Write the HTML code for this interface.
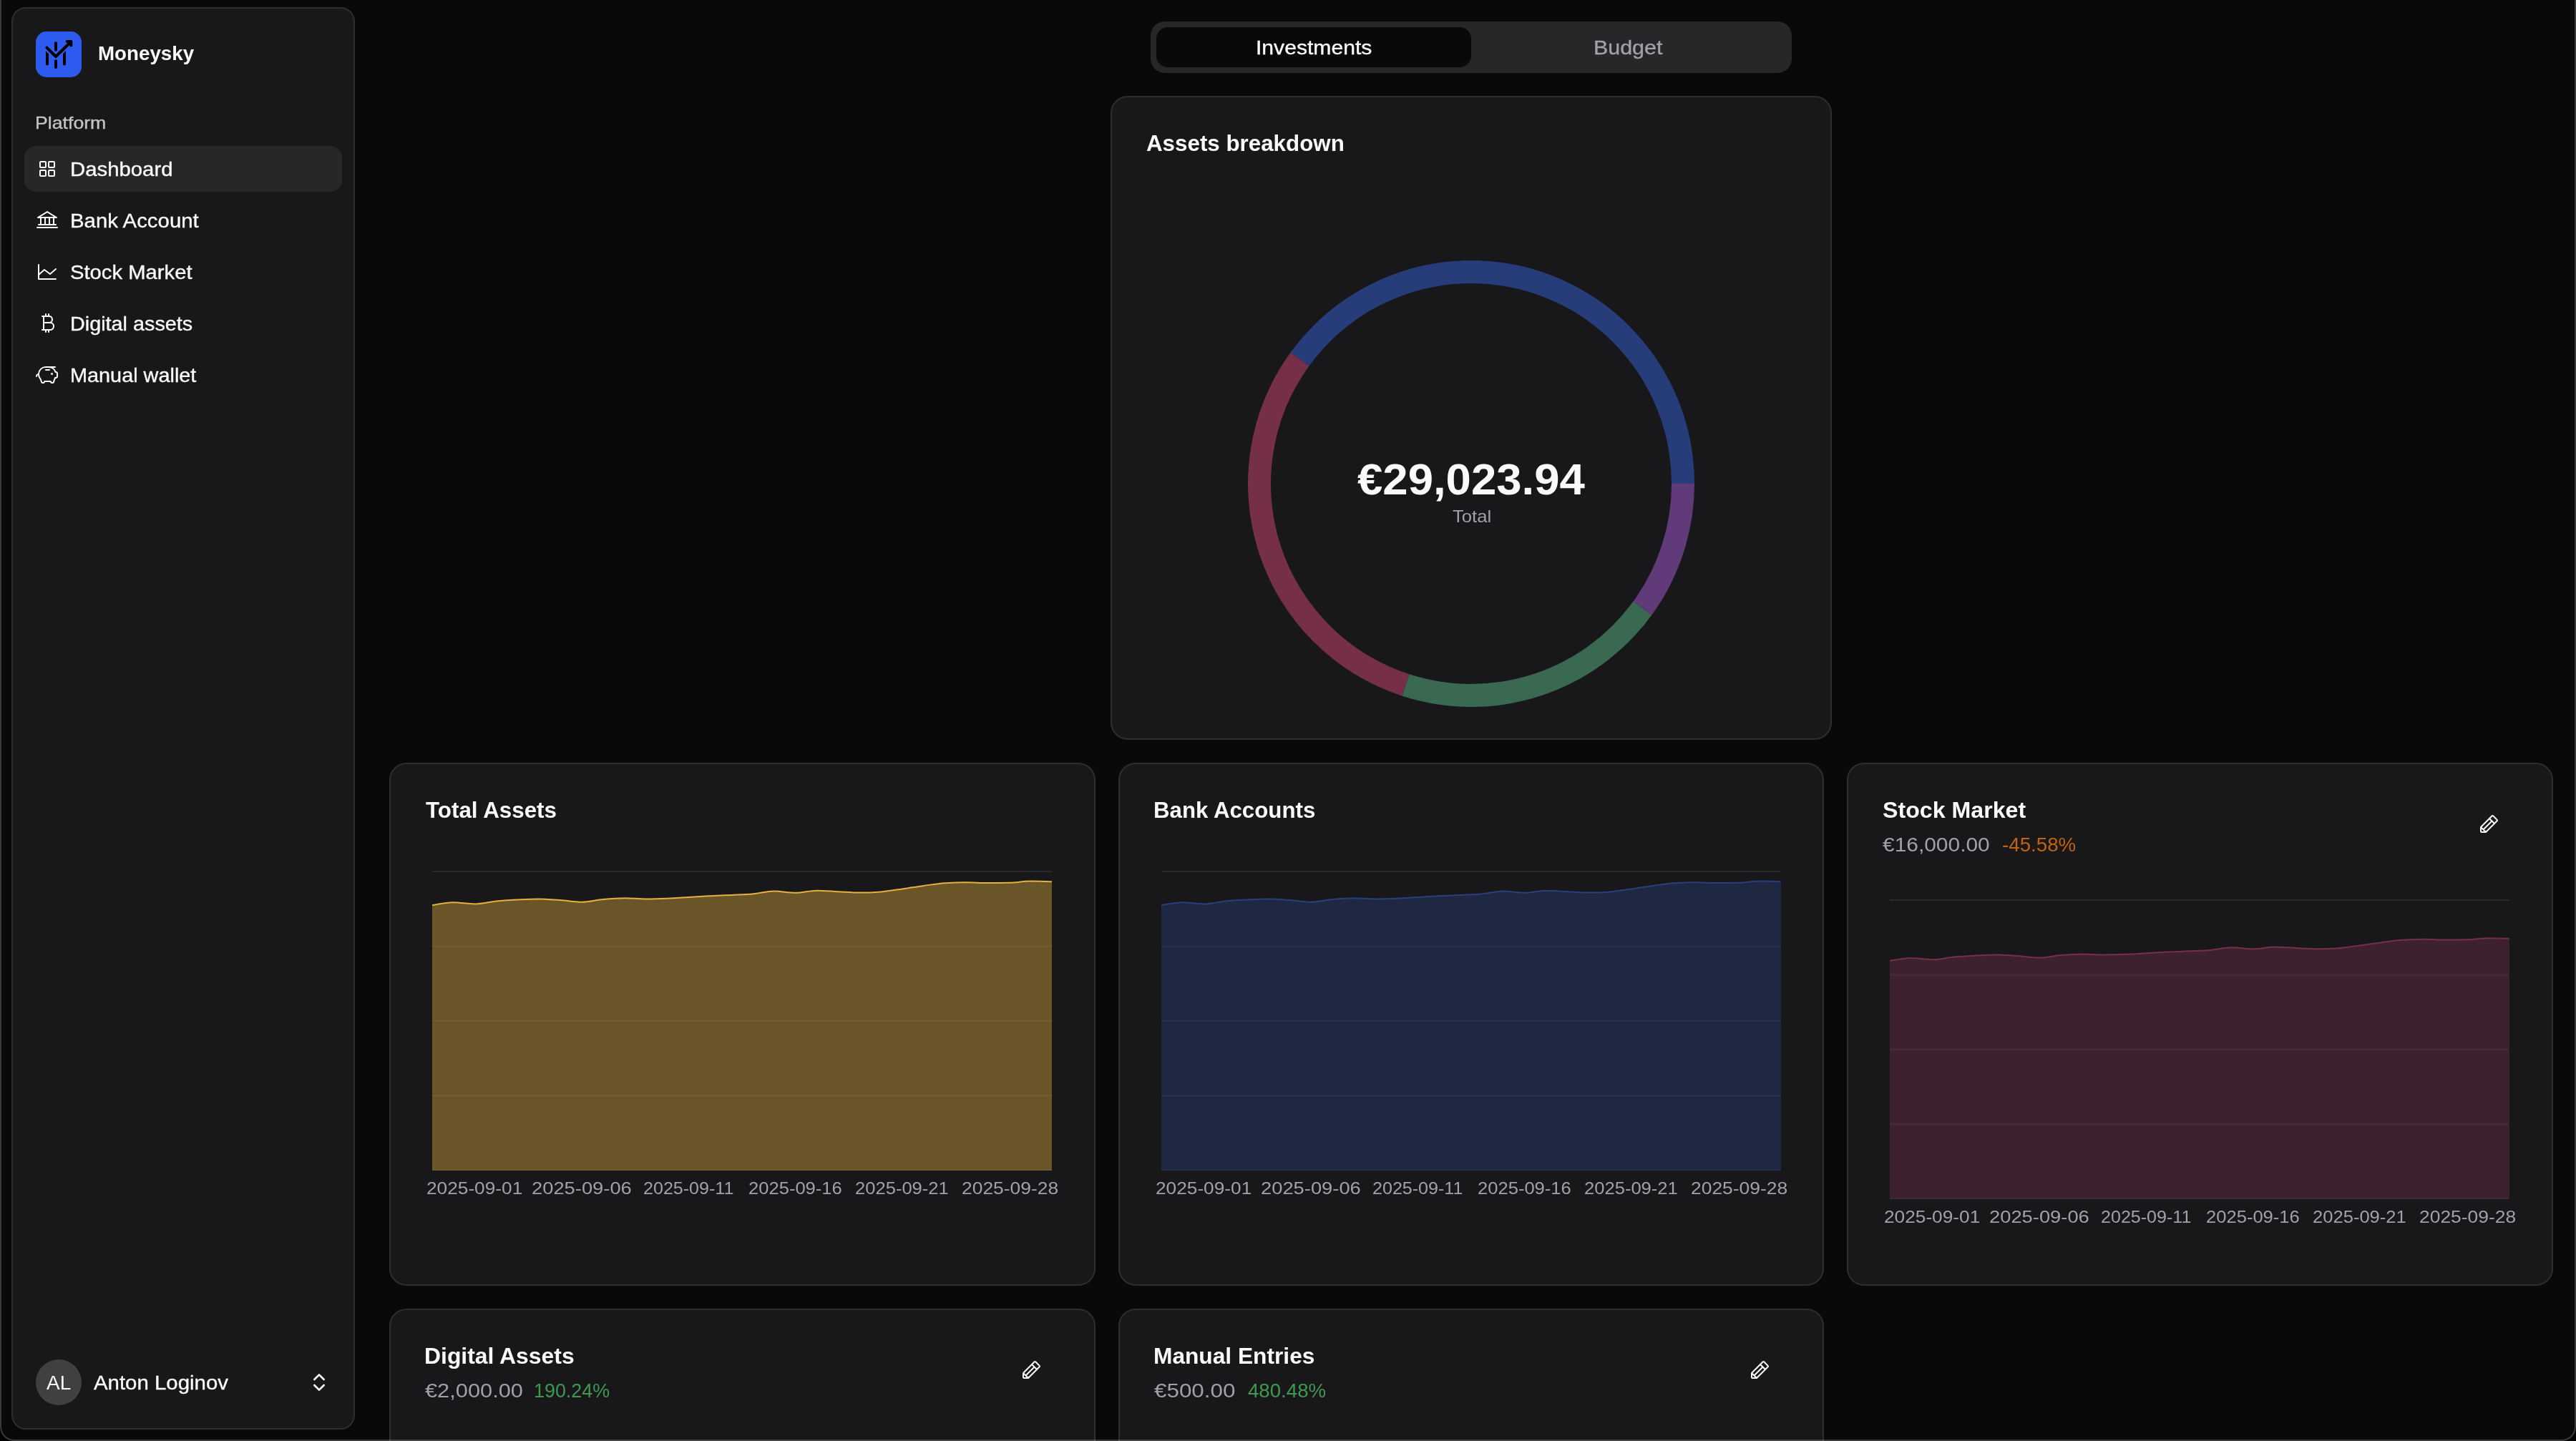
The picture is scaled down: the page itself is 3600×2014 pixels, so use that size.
<!DOCTYPE html>
<html><head><meta charset="utf-8"><title>Moneysky</title><style>
*{box-sizing:border-box;margin:0;padding:0}
html,body{width:3600px;height:2014px;overflow:hidden;background:#000}
body{font-family:"Liberation Sans", sans-serif;position:relative}
.abs{position:absolute}
.t{position:absolute;white-space:pre;line-height:1;font-family:"Liberation Sans", sans-serif;transform-origin:0 0}
.win{position:absolute;left:0;top:0;width:3600px;height:2014px;background:#09090b;border-radius:0 0 20px 20px}
.card{position:absolute;background:#18181b;border:2px solid #2e2e31;border-radius:24px}
</style></head><body>
<div class="win"></div>
<div class="card" style="left:16px;top:10px;width:480px;height:1988px;border-radius:20px"></div>
<div class="abs" style="left:50px;top:44px;width:64px;height:64px;border-radius:15px;background:#2d5bf0"></div>
<svg class="abs" style="left:50px;top:44px" width="64" height="64" viewBox="0 0 64 64" fill="none" stroke-linecap="round" stroke-linejoin="round">
<g stroke="#000" stroke-width="4"><line x1="16" y1="24" x2="16" y2="45.5"/><line x1="40" y1="24" x2="40" y2="45.5"/></g>
<polyline points="13,20.6 28,35 51,12.6" stroke="#2d5bf0" stroke-width="8.4" stroke-linecap="butt"/>
<g stroke="#000" stroke-width="4"><line x1="28" y1="16.3" x2="28" y2="25.7"/><line x1="28" y1="41.3" x2="28" y2="49.9"/>
<polyline points="15.4,22.6 28,35 49.2,14.3"/><polyline points="43.8,14 49.3,14 49.3,19.5"/></g></svg>
<div class="abs" style="left:34px;top:204px;width:444px;height:64px;border-radius:16px;background:#27272a"></div>
<svg class="abs" style="left:50px;top:220px" width="32" height="32" viewBox="0 0 256 256" fill="#fafafa"><path d="M104,40H56A16,16,0,0,0,40,56v48a16,16,0,0,0,16,16h48a16,16,0,0,0,16-16V56A16,16,0,0,0,104,40Zm0,64H56V56h48v48Zm96-64H152a16,16,0,0,0-16,16v48a16,16,0,0,0,16,16h48a16,16,0,0,0,16-16V56A16,16,0,0,0,200,40Zm0,64H152V56h48v48Zm-96,32H56a16,16,0,0,0-16,16v48a16,16,0,0,0,16,16h48a16,16,0,0,0,16-16V152A16,16,0,0,0,104,136Zm0,64H56V152h48v48Zm96-64H152a16,16,0,0,0-16,16v48a16,16,0,0,0,16,16h48a16,16,0,0,0,16-16V152A16,16,0,0,0,200,136Zm0,64H152V152h48v48Z"/></svg>
<svg class="abs" style="left:50px;top:292px" width="32" height="32" viewBox="0 0 256 256" fill="#fafafa"><path d="M24,104H48v64H32a8,8,0,0,0,0,16H224a8,8,0,0,0,0-16H208V104h24a8,8,0,0,0,4.19-14.81l-104-64a8,8,0,0,0-8.38,0l-104,64A8,8,0,0,0,24,104Zm40,0H96v64H64Zm80,0v64H112V104Zm48,64H160V104h32ZM128,41.39,203.74,88H52.26ZM248,208a8,8,0,0,1-8,8H16a8,8,0,0,1,0-16H240A8,8,0,0,1,248,208Z"/></svg>
<svg class="abs" style="left:50px;top:364px" width="32" height="32" viewBox="0 0 256 256" fill="#fafafa"><path d="M232,208a8,8,0,0,1-8,8H32a8,8,0,0,1-8-8V48a8,8,0,0,1,16,0v94.37L90.73,98a8,8,0,0,1,10.07-.38l58.81,44.11L218.73,90a8,8,0,1,1,10.54,12l-64,56a8,8,0,0,1-10.07.38L96.39,114.29,40,163.63V200H224A8,8,0,0,1,232,208Z"/></svg>
<svg class="abs" style="left:51px;top:436px" width="32" height="32" viewBox="0 0 256 256" fill="#fafafa"><path d="M170.48,115.7A44,44,0,0,0,144,40.19V24a8,8,0,0,0-16,0V40H112V24a8,8,0,0,0-16,0V40H64a8,8,0,0,0,0,16h8V192H64a8,8,0,0,0,0,16H96v16a8,8,0,0,0,16,0V208h16v16a8,8,0,0,0,16,0V208h8a48,48,0,0,0,18.48-92.3ZM168,84a28,28,0,0,1-28,28H88V56h52A28,28,0,0,1,168,84ZM152,192H88V128h64a32,32,0,0,1,0,64Z"/></svg>
<svg class="abs" style="left:50px;top:508px" width="32" height="32" viewBox="0 0 256 256" fill="#fafafa"><path d="M192,116a12,12,0,1,1-12-12A12,12,0,0,1,192,116ZM152,64H112a8,8,0,0,0,0,16h40a8,8,0,0,0,0-16Zm96,48v32a24,24,0,0,1-24,24h-2.36l-16.21,45.38A16,16,0,0,1,190.36,224H177.64a16,16,0,0,1-15.07-10.62L160.65,208h-57.3l-1.92,5.38A16,16,0,0,1,86.36,224H73.64a16,16,0,0,1-15.07-10.62L46,178.22a87.69,87.69,0,0,1-21.44-48.38A16,16,0,0,0,16,144a8,8,0,0,1-16,0,32,32,0,0,1,24.28-31A88.12,88.12,0,0,1,112,32H216a8,8,0,0,1,0,16H194.61a87.93,87.93,0,0,1,30.17,37c.43,1,.85,2,1.25,3A24,24,0,0,1,248,112Zm-16,0a8,8,0,0,0-8-8h-3.66a8,8,0,0,1-7.64-5.6A71.9,71.9,0,0,0,144,48H112A72,72,0,0,0,58.91,168.64a8,8,0,0,1,1.64,2.71L73.64,208H86.36l3.82-10.69A8,8,0,0,1,97.71,192h68.58a8,8,0,0,1,7.53,5.31L177.64,208h12.72l18.11-50.69A8,8,0,0,1,216,152h8a8,8,0,0,0,8-8Z"/></svg>
<div class="abs" style="left:50px;top:1900px;width:64px;height:64px;border-radius:50%;background:#404040"></div>
<svg class="abs" style="left:430px;top:1916px" width="32" height="32" viewBox="0 0 24 24" fill="none" stroke="#fafafa" stroke-width="2" stroke-linecap="round" stroke-linejoin="round"><path d="m7 15 5 5 5-5"/><path d="m7 9 5-5 5 5"/></svg>
<div class="abs" style="left:1608px;top:30px;width:896px;height:72px;border-radius:20px;background:#27272a"></div>
<div class="abs" style="left:1616px;top:38px;width:440px;height:56px;border-radius:16px;background:#09090b"></div>
<div class="card" style="left:1552px;top:134px;width:1008px;height:900px"></div>
<svg class="abs" style="left:1552px;top:134px" width="1008" height="900" viewBox="1552 134 1008 900"><path d="M2368.00,676.00A312,312 0 0 0 1803.59,492.61L1829.48,511.42A280,280 0 0 1 2336.00,676.00Z" fill="#273d7a"/><path d="M1803.59,492.61A312,312 0 0 0 1959.59,972.73L1969.48,942.30A280,280 0 0 1 1829.48,511.42Z" fill="#762f48"/><path d="M1959.59,972.73A312,312 0 0 0 2308.41,859.39L2282.52,840.58A280,280 0 0 1 1969.48,942.30Z" fill="#3a6952"/><path d="M2308.41,859.39A312,312 0 0 0 2368.00,676.00L2336.00,676.00A280,280 0 0 1 2282.52,840.58Z" fill="#613a7a"/></svg>
<div class="card" style="left:544.00px;top:1066px;width:986.67px;height:731px"></div>
<div class="card" style="left:1562.67px;top:1066px;width:986.67px;height:731px"></div>
<div class="card" style="left:2581.33px;top:1066px;width:986.67px;height:731px"></div>
<div class="card" style="left:544.00px;top:1829px;width:986.67px;height:300px"></div>
<div class="card" style="left:1562.67px;top:1829px;width:986.67px;height:300px"></div>
<svg class="abs" style="left:603.85px;top:1217.00px" width="866" height="419.1" viewBox="0 0 866 419.1"><line x1="0" x2="866.0" y1="1.05" y2="1.05" stroke="#2a2a2d" stroke-width="2"/><line x1="0" x2="866.0" y1="105.45" y2="105.45" stroke="#2a2a2d" stroke-width="2"/><line x1="0" x2="866.0" y1="209.85" y2="209.85" stroke="#2a2a2d" stroke-width="2"/><line x1="0" x2="866.0" y1="314.25" y2="314.25" stroke="#2a2a2d" stroke-width="2"/><line x1="0" x2="866.0" y1="418.65" y2="418.65" stroke="#2a2a2d" stroke-width="2"/><path d="M0.00,48.30C9.95,46.25,19.91,44.20,29.86,44.20C39.82,44.20,49.77,46.50,59.72,46.50C69.68,46.50,79.63,43.50,89.59,42.50C99.54,41.50,109.49,41.02,119.45,40.50C129.40,39.98,139.36,39.40,149.31,39.40C159.26,39.40,169.22,40.28,179.17,41.00C189.13,41.72,199.08,43.70,209.03,43.70C218.99,43.70,228.94,40.90,238.90,40.00C248.85,39.10,258.80,38.30,268.76,38.30C278.71,38.30,288.67,39.40,298.62,39.40C308.57,39.40,318.53,39.10,328.48,38.70C338.44,38.30,348.39,37.58,358.34,37.00C368.30,36.42,378.25,35.72,388.21,35.20C398.16,34.68,408.11,34.37,418.07,33.90C428.02,33.43,437.98,33.30,447.93,32.40C457.89,31.50,467.84,28.50,477.79,28.50C487.75,28.50,497.70,30.80,507.66,30.80C517.61,30.80,527.56,27.70,537.52,27.70C547.47,27.70,557.43,28.72,567.38,29.20C577.33,29.68,587.29,30.60,597.24,30.60C607.20,30.60,617.15,30.20,627.10,29.40C637.06,28.60,647.01,26.82,656.97,25.40C666.92,23.98,676.87,22.27,686.83,20.90C696.78,19.53,706.74,17.80,716.69,17.20C726.64,16.60,736.60,16.30,746.55,16.30C756.51,16.30,766.46,17.00,776.41,17.00C786.37,17.00,796.32,16.93,806.28,16.80C816.23,16.67,826.18,14.60,836.14,14.60C846.09,14.60,856.05,14.90,866.00,15.20L866.00,419.10L0,419.10Z" fill="#e6b23e" fill-opacity=".4"/><path d="M0.00,48.30C9.95,46.25,19.91,44.20,29.86,44.20C39.82,44.20,49.77,46.50,59.72,46.50C69.68,46.50,79.63,43.50,89.59,42.50C99.54,41.50,109.49,41.02,119.45,40.50C129.40,39.98,139.36,39.40,149.31,39.40C159.26,39.40,169.22,40.28,179.17,41.00C189.13,41.72,199.08,43.70,209.03,43.70C218.99,43.70,228.94,40.90,238.90,40.00C248.85,39.10,258.80,38.30,268.76,38.30C278.71,38.30,288.67,39.40,298.62,39.40C308.57,39.40,318.53,39.10,328.48,38.70C338.44,38.30,348.39,37.58,358.34,37.00C368.30,36.42,378.25,35.72,388.21,35.20C398.16,34.68,408.11,34.37,418.07,33.90C428.02,33.43,437.98,33.30,447.93,32.40C457.89,31.50,467.84,28.50,477.79,28.50C487.75,28.50,497.70,30.80,507.66,30.80C517.61,30.80,527.56,27.70,537.52,27.70C547.47,27.70,557.43,28.72,567.38,29.20C577.33,29.68,587.29,30.60,597.24,30.60C607.20,30.60,617.15,30.20,627.10,29.40C637.06,28.60,647.01,26.82,656.97,25.40C666.92,23.98,676.87,22.27,686.83,20.90C696.78,19.53,706.74,17.80,716.69,17.20C726.64,16.60,736.60,16.30,746.55,16.30C756.51,16.30,766.46,17.00,776.41,17.00C786.37,17.00,796.32,16.93,806.28,16.80C816.23,16.67,826.18,14.60,836.14,14.60C846.09,14.60,856.05,14.90,866.00,15.20" fill="none" stroke="#e6b23e" stroke-width="2"/></svg>
<svg class="abs" style="left:1622.80px;top:1217.00px" width="866" height="419.1" viewBox="0 0 866 419.1"><line x1="0" x2="866.0" y1="1.05" y2="1.05" stroke="#2a2a2d" stroke-width="2"/><line x1="0" x2="866.0" y1="105.45" y2="105.45" stroke="#2a2a2d" stroke-width="2"/><line x1="0" x2="866.0" y1="209.85" y2="209.85" stroke="#2a2a2d" stroke-width="2"/><line x1="0" x2="866.0" y1="314.25" y2="314.25" stroke="#2a2a2d" stroke-width="2"/><line x1="0" x2="866.0" y1="418.65" y2="418.65" stroke="#2a2a2d" stroke-width="2"/><path d="M0.00,48.30C9.95,46.25,19.91,44.20,29.86,44.20C39.82,44.20,49.77,46.50,59.72,46.50C69.68,46.50,79.63,43.50,89.59,42.50C99.54,41.50,109.49,41.02,119.45,40.50C129.40,39.98,139.36,39.40,149.31,39.40C159.26,39.40,169.22,40.28,179.17,41.00C189.13,41.72,199.08,43.70,209.03,43.70C218.99,43.70,228.94,40.90,238.90,40.00C248.85,39.10,258.80,38.30,268.76,38.30C278.71,38.30,288.67,39.40,298.62,39.40C308.57,39.40,318.53,39.10,328.48,38.70C338.44,38.30,348.39,37.58,358.34,37.00C368.30,36.42,378.25,35.72,388.21,35.20C398.16,34.68,408.11,34.37,418.07,33.90C428.02,33.43,437.98,33.30,447.93,32.40C457.89,31.50,467.84,28.50,477.79,28.50C487.75,28.50,497.70,30.80,507.66,30.80C517.61,30.80,527.56,27.70,537.52,27.70C547.47,27.70,557.43,28.72,567.38,29.20C577.33,29.68,587.29,30.60,597.24,30.60C607.20,30.60,617.15,30.20,627.10,29.40C637.06,28.60,647.01,26.82,656.97,25.40C666.92,23.98,676.87,22.27,686.83,20.90C696.78,19.53,706.74,17.80,716.69,17.20C726.64,16.60,736.60,16.30,746.55,16.30C756.51,16.30,766.46,17.00,776.41,17.00C786.37,17.00,796.32,16.93,806.28,16.80C816.23,16.67,826.18,14.60,836.14,14.60C846.09,14.60,856.05,14.90,866.00,15.20L866.00,419.10L0,419.10Z" fill="#29407c" fill-opacity=".4"/><path d="M0.00,48.30C9.95,46.25,19.91,44.20,29.86,44.20C39.82,44.20,49.77,46.50,59.72,46.50C69.68,46.50,79.63,43.50,89.59,42.50C99.54,41.50,109.49,41.02,119.45,40.50C129.40,39.98,139.36,39.40,149.31,39.40C159.26,39.40,169.22,40.28,179.17,41.00C189.13,41.72,199.08,43.70,209.03,43.70C218.99,43.70,228.94,40.90,238.90,40.00C248.85,39.10,258.80,38.30,268.76,38.30C278.71,38.30,288.67,39.40,298.62,39.40C308.57,39.40,318.53,39.10,328.48,38.70C338.44,38.30,348.39,37.58,358.34,37.00C368.30,36.42,378.25,35.72,388.21,35.20C398.16,34.68,408.11,34.37,418.07,33.90C428.02,33.43,437.98,33.30,447.93,32.40C457.89,31.50,467.84,28.50,477.79,28.50C487.75,28.50,497.70,30.80,507.66,30.80C517.61,30.80,527.56,27.70,537.52,27.70C547.47,27.70,557.43,28.72,567.38,29.20C577.33,29.68,587.29,30.60,597.24,30.60C607.20,30.60,617.15,30.20,627.10,29.40C637.06,28.60,647.01,26.82,656.97,25.40C666.92,23.98,676.87,22.27,686.83,20.90C696.78,19.53,706.74,17.80,716.69,17.20C726.64,16.60,736.60,16.30,746.55,16.30C756.51,16.30,766.46,17.00,776.41,17.00C786.37,17.00,796.32,16.93,806.28,16.80C816.23,16.67,826.18,14.60,836.14,14.60C846.09,14.60,856.05,14.90,866.00,15.20" fill="none" stroke="#29407c" stroke-width="2"/></svg>
<svg class="abs" style="left:2640.80px;top:1256.80px" width="866" height="419.1" viewBox="0 0 866 419.1"><line x1="0" x2="866.0" y1="1.05" y2="1.05" stroke="#2a2a2d" stroke-width="2"/><line x1="0" x2="866.0" y1="105.45" y2="105.45" stroke="#2a2a2d" stroke-width="2"/><line x1="0" x2="866.0" y1="209.85" y2="209.85" stroke="#2a2a2d" stroke-width="2"/><line x1="0" x2="866.0" y1="314.25" y2="314.25" stroke="#2a2a2d" stroke-width="2"/><line x1="0" x2="866.0" y1="418.65" y2="418.65" stroke="#2a2a2d" stroke-width="2"/><path d="M0.00,85.88C9.95,83.95,19.91,82.03,29.86,82.03C39.82,82.03,49.77,84.19,59.72,84.19C69.68,84.19,79.63,81.37,89.59,80.43C99.54,79.49,109.49,79.04,119.45,78.55C129.40,78.07,139.36,77.52,149.31,77.52C159.26,77.52,169.22,78.35,179.17,79.02C189.13,79.69,199.08,81.56,209.03,81.56C218.99,81.56,228.94,78.93,238.90,78.08C248.85,77.24,258.80,76.49,268.76,76.49C278.71,76.49,288.67,77.52,298.62,77.52C308.57,77.52,318.53,77.24,328.48,76.86C338.44,76.49,348.39,75.81,358.34,75.26C368.30,74.72,378.25,74.06,388.21,73.57C398.16,73.09,408.11,72.79,418.07,72.35C428.02,71.92,437.98,71.79,447.93,70.95C457.89,70.10,467.84,67.28,477.79,67.28C487.75,67.28,497.70,69.44,507.66,69.44C517.61,69.44,527.56,66.53,537.52,66.53C547.47,66.53,557.43,67.49,567.38,67.94C577.33,68.39,587.29,69.26,597.24,69.26C607.20,69.26,617.15,68.88,627.10,68.13C637.06,67.38,647.01,65.70,656.97,64.37C666.92,63.04,676.87,61.43,686.83,60.15C696.78,58.86,706.74,57.24,716.69,56.67C726.64,56.11,736.60,55.83,746.55,55.83C756.51,55.83,766.46,56.48,776.41,56.48C786.37,56.48,796.32,56.42,806.28,56.30C816.23,56.17,826.18,54.23,836.14,54.23C846.09,54.23,856.05,54.51,866.00,54.79L866.00,419.10L0,419.10Z" fill="#782f4a" fill-opacity=".4"/><path d="M0.00,85.88C9.95,83.95,19.91,82.03,29.86,82.03C39.82,82.03,49.77,84.19,59.72,84.19C69.68,84.19,79.63,81.37,89.59,80.43C99.54,79.49,109.49,79.04,119.45,78.55C129.40,78.07,139.36,77.52,149.31,77.52C159.26,77.52,169.22,78.35,179.17,79.02C189.13,79.69,199.08,81.56,209.03,81.56C218.99,81.56,228.94,78.93,238.90,78.08C248.85,77.24,258.80,76.49,268.76,76.49C278.71,76.49,288.67,77.52,298.62,77.52C308.57,77.52,318.53,77.24,328.48,76.86C338.44,76.49,348.39,75.81,358.34,75.26C368.30,74.72,378.25,74.06,388.21,73.57C398.16,73.09,408.11,72.79,418.07,72.35C428.02,71.92,437.98,71.79,447.93,70.95C457.89,70.10,467.84,67.28,477.79,67.28C487.75,67.28,497.70,69.44,507.66,69.44C517.61,69.44,527.56,66.53,537.52,66.53C547.47,66.53,557.43,67.49,567.38,67.94C577.33,68.39,587.29,69.26,597.24,69.26C607.20,69.26,617.15,68.88,627.10,68.13C637.06,67.38,647.01,65.70,656.97,64.37C666.92,63.04,676.87,61.43,686.83,60.15C696.78,58.86,706.74,57.24,716.69,56.67C726.64,56.11,736.60,55.83,746.55,55.83C756.51,55.83,766.46,56.48,776.41,56.48C786.37,56.48,796.32,56.42,806.28,56.30C816.23,56.17,826.18,54.23,836.14,54.23C846.09,54.23,856.05,54.51,866.00,54.79" fill="none" stroke="#782f4a" stroke-width="2"/></svg>
<svg class="abs" style="left:3462px;top:1136px" width="32" height="32" viewBox="0 0 256 256" fill="#fafafa"><path d="M227.31,73.37,182.63,28.68a16,16,0,0,0-22.63,0L36.69,152A15.86,15.86,0,0,0,32,163.31V208a16,16,0,0,0,16,16H92.69A15.86,15.86,0,0,0,104,219.31L227.31,96a16,16,0,0,0,0-22.63ZM51.31,160,136,75.31,152.69,92,68,176.68ZM48,179.31,76.69,208H48Zm48,25.38L79.31,188,164,103.31,180.69,120Zm96-96L147.31,64l24-24L216,84.68Z"/></svg>
<svg class="abs" style="left:1424.666666666667px;top:1899px" width="32" height="32" viewBox="0 0 256 256" fill="#fafafa"><path d="M227.31,73.37,182.63,28.68a16,16,0,0,0-22.63,0L36.69,152A15.86,15.86,0,0,0,32,163.31V208a16,16,0,0,0,16,16H92.69A15.86,15.86,0,0,0,104,219.31L227.31,96a16,16,0,0,0,0-22.63ZM51.31,160,136,75.31,152.69,92,68,176.68ZM48,179.31,76.69,208H48Zm48,25.38L79.31,188,164,103.31,180.69,120Zm96-96L147.31,64l24-24L216,84.68Z"/></svg>
<svg class="abs" style="left:2443.3333333333335px;top:1899px" width="32" height="32" viewBox="0 0 256 256" fill="#fafafa"><path d="M227.31,73.37,182.63,28.68a16,16,0,0,0-22.63,0L36.69,152A15.86,15.86,0,0,0,32,163.31V208a16,16,0,0,0,16,16H92.69A15.86,15.86,0,0,0,104,219.31L227.31,96a16,16,0,0,0,0-22.63ZM51.31,160,136,75.31,152.69,92,68,176.68ZM48,179.31,76.69,208H48Zm48,25.38L79.31,188,164,103.31,180.69,120Zm96-96L147.31,64l24-24L216,84.68Z"/></svg>
<div class="abs" style="left:0;top:0;width:3600px;height:2014px;will-change:transform">
<span class="t" style="left:137.12px;top:60.50px;font-size:28px;font-weight:700;color:#fafafa;transform:scaleX(0.9902)">Moneysky</span>
<span class="t" style="left:49.18px;top:159.50px;font-size:24px;font-weight:400;color:#c4c4c6;transform:scaleX(1.1116);-webkit-text-stroke:0.35px #c4c4c6">Platform</span>
<span class="t" style="left:97.80px;top:222.50px;font-size:28px;font-weight:400;color:#fafafa;transform:scaleX(1.0478);-webkit-text-stroke:0.35px #fafafa">Dashboard</span>
<span class="t" style="left:97.80px;top:294.50px;font-size:28px;font-weight:400;color:#fafafa;transform:scaleX(1.0497);-webkit-text-stroke:0.35px #fafafa">Bank Account</span>
<span class="t" style="left:97.56px;top:366.50px;font-size:28px;font-weight:400;color:#fafafa;transform:scaleX(1.0438);-webkit-text-stroke:0.35px #fafafa">Stock Market</span>
<span class="t" style="left:97.64px;top:438.50px;font-size:28px;font-weight:400;color:#fafafa;transform:scaleX(1.0280);-webkit-text-stroke:0.35px #fafafa">Digital assets</span>
<span class="t" style="left:97.64px;top:510.50px;font-size:28px;font-weight:400;color:#fafafa;transform:scaleX(1.0302);-webkit-text-stroke:0.35px #fafafa">Manual wallet</span>
<span class="t" style="left:64.80px;top:1918.50px;font-size:28px;font-weight:400;color:#fafafa;transform:scaleX(0.9985)">AL</span>
<span class="t" style="left:131.40px;top:1918.50px;font-size:28px;font-weight:400;color:#fafafa;transform:scaleX(1.0497);-webkit-text-stroke:0.35px #fafafa">Anton Loginov</span>
<span class="t" style="left:1754.75px;top:52.50px;font-size:28px;font-weight:400;color:#fafafa;transform:scaleX(1.0757);-webkit-text-stroke:0.35px #fafafa">Investments</span>
<span class="t" style="left:2226.53px;top:52.50px;font-size:28px;font-weight:400;color:#a1a1aa;transform:scaleX(1.0862);-webkit-text-stroke:0.35px #a1a1aa">Budget</span>
<span class="t" style="left:1602.42px;top:184.00px;font-size:32px;font-weight:700;color:#fafafa;transform:scaleX(0.9789)">Assets breakdown</span>
<span class="t" style="left:594.50px;top:1116.00px;font-size:32px;font-weight:700;color:#fafafa;transform:scaleX(0.9801)">Total Assets</span>
<span class="t" style="left:1612.45px;top:1116.00px;font-size:32px;font-weight:700;color:#fafafa;transform:scaleX(0.9764)">Bank Accounts</span>
<span class="t" style="left:2631.09px;top:1116.00px;font-size:32px;font-weight:700;color:#fafafa;transform:scaleX(1.0051)">Stock Market</span>
<span class="t" style="left:592.81px;top:1879.00px;font-size:32px;font-weight:700;color:#fafafa;transform:scaleX(0.9961)">Digital Assets</span>
<span class="t" style="left:1612.12px;top:1879.00px;font-size:32px;font-weight:700;color:#fafafa;transform:scaleX(0.9902)">Manual Entries</span>
<span class="t" style="left:2631.10px;top:1166.50px;font-size:28px;font-weight:400;color:#a1a1aa;transform:scaleX(1.0683)">€16,000.00</span>
<span class="t" style="left:2797.81px;top:1166.50px;font-size:28px;font-weight:400;color:#c4620f;transform:scaleX(0.9893)">-45.58%</span>
<span class="t" style="left:594.00px;top:1929.50px;font-size:28px;font-weight:400;color:#a1a1aa;transform:scaleX(1.0992)">€2,000.00</span>
<span class="t" style="left:745.88px;top:1929.50px;font-size:28px;font-weight:400;color:#3f9a4e;transform:scaleX(0.9593)">190.24%</span>
<span class="t" style="left:1612.60px;top:1929.50px;font-size:28px;font-weight:400;color:#a1a1aa;transform:scaleX(1.1208)">€500.00</span>
<span class="t" style="left:1744.00px;top:1929.50px;font-size:28px;font-weight:400;color:#3f9a4e;transform:scaleX(0.9873)">480.48%</span>
<span class="t" style="left:1896.50px;top:638.50px;font-size:62px;font-weight:700;color:#fafafa;transform:scaleX(1.0242)">€29,023.94</span>
<span class="t" style="left:2030.00px;top:709.50px;font-size:24px;font-weight:400;color:#a1a1aa;transform:scaleX(1.0694)">Total</span>
<span class="t" style="left:596.33px;top:1648.50px;font-size:24px;color:#a1a1aa;transform:scaleX(1.0934)">2025-09-01</span><span class="t" style="left:742.85px;top:1648.50px;font-size:24px;color:#a1a1aa;transform:scaleX(1.1388)">2025-09-06</span><span class="t" style="left:899.00px;top:1648.50px;font-size:24px;color:#a1a1aa;transform:scaleX(1.0445)">2025-09-11</span><span class="t" style="left:1045.99px;top:1648.50px;font-size:24px;color:#a1a1aa;transform:scaleX(1.0653)">2025-09-16</span><span class="t" style="left:1195.30px;top:1648.50px;font-size:24px;color:#a1a1aa;transform:scaleX(1.0653)">2025-09-21</span><span class="t" style="left:1344.43px;top:1648.50px;font-size:24px;color:#a1a1aa;transform:scaleX(1.1008)">2025-09-28</span>
<span class="t" style="left:1615.28px;top:1648.50px;font-size:24px;color:#a1a1aa;transform:scaleX(1.0934)">2025-09-01</span><span class="t" style="left:1761.80px;top:1648.50px;font-size:24px;color:#a1a1aa;transform:scaleX(1.1388)">2025-09-06</span><span class="t" style="left:1917.95px;top:1648.50px;font-size:24px;color:#a1a1aa;transform:scaleX(1.0445)">2025-09-11</span><span class="t" style="left:2064.94px;top:1648.50px;font-size:24px;color:#a1a1aa;transform:scaleX(1.0653)">2025-09-16</span><span class="t" style="left:2214.25px;top:1648.50px;font-size:24px;color:#a1a1aa;transform:scaleX(1.0653)">2025-09-21</span><span class="t" style="left:2363.38px;top:1648.50px;font-size:24px;color:#a1a1aa;transform:scaleX(1.1008)">2025-09-28</span>
<span class="t" style="left:2633.28px;top:1688.50px;font-size:24px;color:#a1a1aa;transform:scaleX(1.0934)">2025-09-01</span><span class="t" style="left:2779.80px;top:1688.50px;font-size:24px;color:#a1a1aa;transform:scaleX(1.1388)">2025-09-06</span><span class="t" style="left:2935.95px;top:1688.50px;font-size:24px;color:#a1a1aa;transform:scaleX(1.0445)">2025-09-11</span><span class="t" style="left:3082.94px;top:1688.50px;font-size:24px;color:#a1a1aa;transform:scaleX(1.0653)">2025-09-16</span><span class="t" style="left:3232.25px;top:1688.50px;font-size:24px;color:#a1a1aa;transform:scaleX(1.0653)">2025-09-21</span><span class="t" style="left:3381.38px;top:1688.50px;font-size:24px;color:#a1a1aa;transform:scaleX(1.1008)">2025-09-28</span>
</div>
<div class="abs" style="left:0;top:0;width:3600px;height:2014px;border:2px solid rgba(255,255,255,.2);border-top:none;border-radius:0 0 20px 20px;box-shadow:0 0 0 40px #000;pointer-events:none"></div>
</body></html>
